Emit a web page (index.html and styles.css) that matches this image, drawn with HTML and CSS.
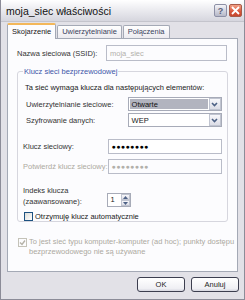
FILE: index.html
```html
<!DOCTYPE html>
<html lang="pl">
<head>
  <meta charset="UTF-8" />
  <title>moja_siec właściwości</title>
  <link rel="stylesheet" href="styles.css">
</head>
<body>
  <div class="window">
    <div class="titlebar">
      <span class="title">moja_siec właściwości</span>
      <div class="caption-buttons">
        <span class="cap-btn help">?</span>
        <span class="cap-btn close">
          <svg width="9" height="9" viewBox="0 0 9 9"><path d="M1 1L8 8M8 1L1 8" stroke="#fff" stroke-width="1.8"/></svg>
        </span>
      </div>
    </div>

    <div class="tabs">
      <span class="tab active">Skojarzenie</span>
      <span class="tab">Uwierzytelnianie</span>
      <span class="tab">Połączenia</span>
    </div>

    <div class="panel">
      <div class="row ssid">
        <span class="label">Nazwa sieciowa (SSID):</span>
        <span class="field disabled wide">moja_siec</span>
      </div>

      <fieldset class="group">
        <legend>Klucz sieci bezprzewodowej</legend>
        <p class="intro">Ta sieć wymaga klucza dla następujących elementów:</p>

        <div class="row combo-row">
          <span class="label">Uwierzytelnianie sieciowe:</span>
          <span class="combo"><span class="combo-text selected">Otwarte</span><span class="arrow"><svg width="7" height="5" viewBox="0 0 7 5"><path d="M1 1L3.5 3.5L6 1" stroke="#4d6185" stroke-width="1.6" fill="none"/></svg></span></span>
        </div>
        <div class="row combo-row">
          <span class="label">Szyfrowanie danych:</span>
          <span class="combo"><span class="combo-text">WEP</span><span class="arrow"><svg width="7" height="5" viewBox="0 0 7 5"><path d="M1 1L3.5 3.5L6 1" stroke="#4d6185" stroke-width="1.6" fill="none"/></svg></span></span>
        </div>

        <div class="row key-row first">
          <span class="label">Klucz sieciowy:</span>
          <span class="field key">●●●●●●●●</span>
        </div>
        <div class="row key-row">
          <span class="label muted">Potwierdź klucz sieciowy:</span>
          <span class="field key disabled">●●●●●●●●</span>
        </div>

        <div class="row index-row">
          <span class="label">Indeks klucza<br>(zaawansowane):</span>
          <span class="spinner">
            <span class="spin-value">1</span>
            <span class="spin-buttons">
              <span class="spin-btn"><svg width="5" height="3" viewBox="0 0 5 3"><path d="M0 3L2.5 0L5 3Z" fill="#4d6185"/></svg></span>
              <span class="spin-btn"><svg width="5" height="3" viewBox="0 0 5 3"><path d="M0 0L2.5 3L5 0Z" fill="#4d6185"/></svg></span>
            </span>
          </span>
        </div>

        <label class="check">
          <span class="box"></span>
          <span>Otrzymuję klucz automatycznie</span>
        </label>
      </fieldset>

      <label class="check adhoc">
        <span class="box checked"><svg width="7" height="7" viewBox="0 0 7 7"><path d="M1 3.5L3 5.5L6 1.5" stroke="#b5b2a8" stroke-width="1.4" fill="none"/></svg></span>
        <span>To jest sieć typu komputer-komputer (ad hoc); punkty dostępu<br>bezprzewodowego nie są używane</span>
      </label>
    </div>

    <div class="footer">
      <span class="btn">OK</span>
      <span class="btn">Anuluj</span>
    </div>
  </div>
</body>
</html>
```

FILE: styles.css
```css
/* Silver XP dialog, scaled down */
body {
  margin: 0;
  padding: 0;
  background: #ffffff;
  font-family: 'Liberation Sans', Arial, sans-serif;
  font-size: 7.5px;
  color: #1a1a1a;
}

.window {
  width: 245px;
  height: 300px;
  box-sizing: border-box;
  background: #e2e1e7;
  border: 1px solid #8c8c98;
  border-top: none;
  display: flex;
  flex-direction: column;
}

/* Title bar */
.titlebar {
  height: 21px;
  flex-shrink: 0;
  display: flex;
  align-items: center;
  justify-content: space-between;
  padding: 0 2px 0 5px;
  background: linear-gradient(#ffffff, #eeeef2 40%, #d6d6de 100%);
  border-bottom: 1px solid #c4c4cc;
}

.title {
  font-size: 10.5px;
  color: #111;
}

.caption-buttons {
  display: flex;
  gap: 2px;
}

.cap-btn {
  width: 13px;
  height: 13px;
  box-sizing: border-box;
  border: 1px solid #8d90a6;
  border-radius: 2px;
  display: flex;
  align-items: center;
  justify-content: center;
}

.help {
  background: linear-gradient(#f4f4f8, #b6b8c8);
  color: #5a6078;
  font-size: 9px;
  font-weight: bold;
}

.close {
  background: linear-gradient(#f2a186, #d8553a 60%, #c6482e);
  border-color: #a85a48;
}

/* Tabs */
.tabs {
  display: flex;
  align-items: flex-end;
  padding: 3px 0 0 6px;
  height: 13px;
  flex-shrink: 0;
}

.tab {
  height: 12px;
  line-height: 12px;
  padding: 0 4px;
  background: linear-gradient(#fefefe, #ecebf0);
  border: 1px solid #a4a9b5;
  border-bottom: none;
  border-radius: 2px 2px 0 0;
  color: #39425c;
  margin-right: 1px;
  white-space: nowrap;
}

.tab.active {
  height: 14px;
  line-height: 14px;
  background: #fcfcfe;
  border-top: 2px solid #f3b75a;
  color: #1a1a1a;
  position: relative;
  top: 1px;
}

/* Tab page */
.panel {
  margin: 0 6px;
  height: 234px;
  flex-shrink: 0;
  box-sizing: border-box;
  background: #fcfcfe;
  border: 1px solid #a4a9b5;
  padding: 6px 10px 0 9px;
}

.row {
  display: flex;
  align-items: center;
  white-space: nowrap;
}

.label {
  color: #333;
}

.muted {
  color: #aca9a0;
}

.field {
  height: 16px;
  box-sizing: border-box;
  border: 1px solid #b9bcc8;
  background: #fff;
  display: flex;
  align-items: center;
  padding: 0 3px;
}

.disabled {
  background: #fcfcfe;
  color: #b2b0ab;
}

.ssid {
  justify-content: space-between;
  height: 16px;
}

.ssid .wide {
  width: 121px;
}

/* Group box */
.group {
  margin: 6px 0 0 0;
  padding: 0 5px 0 6px;
  border: 1px solid #d6d6de;
  border-radius: 3px;
  height: 155px;
  box-sizing: border-box;
}

.group legend {
  color: #3d56a8;
  padding: 0 1px;
  margin-left: -1px;
}

.intro {
  margin: 7px 0 4px 1px;
}

.combo-row {
  height: 16px;
  justify-content: space-between;
}

.combo-row .label {
  padding-left: 2px;
}

.combo {
  width: 94px;
  height: 14px;
  box-sizing: border-box;
  border: 1px solid #a7abb8;
  background: #fff;
  display: flex;
  align-items: stretch;
}

.combo-text {
  flex: 1;
  display: flex;
  align-items: center;
  padding-left: 2px;
  margin: 1px;
}

.combo-text.selected {
  background: #b2b4bf;
  color: #111;
}

.arrow {
  width: 12px;
  box-sizing: border-box;
  border: 1px solid #c0c4d0;
  background: linear-gradient(#f8f8fb, #dcdde6);
  display: flex;
  align-items: center;
  justify-content: center;
}

.key-row {
  height: 15px;
  justify-content: space-between;
  margin-left: -1px;
  margin-top: 5px;
}

.key-row.first {
  margin-top: 11px;
}

.key {
  width: 114px;
  height: 15px;
  font-size: 7px;
  letter-spacing: 0.4px;
  color: #000;
}

.key.disabled {
  color: #b2b0ab;
}

.index-row {
  margin-top: 11px;
  margin-left: -1px;
  align-items: flex-end;
  justify-content: space-between;
  padding-right: 91px;
}

.index-row .label {
  line-height: 11px;
}

.spinner {
  width: 24px;
  height: 14px;
  box-sizing: border-box;
  border: 1px solid #a7abb8;
  background: #fff;
  display: flex;
}

.spin-value {
  flex: 1;
  padding-left: 3px;
  line-height: 12px;
}

.spin-buttons {
  width: 9px;
  display: flex;
  flex-direction: column;
}

.spin-btn {
  flex: 1;
  border: 1px solid #c0c4d0;
  background: linear-gradient(#f8f8fb, #dcdde6);
  display: flex;
  align-items: center;
  justify-content: center;
}

/* Check boxes */
.check {
  display: flex;
  align-items: flex-start;
  gap: 2px;
  margin-top: 5px;
  white-space: nowrap;
}

.box {
  width: 9px;
  height: 9px;
  box-sizing: border-box;
  border: 1px solid #1c5180;
  background: linear-gradient(135deg, #dcdcd7, #ffffff);
  display: flex;
  align-items: center;
  justify-content: center;
  flex-shrink: 0;
}

.adhoc {
  margin-top: 15px;
  color: #aca9a0;
  line-height: 10px;
  margin-left: 1px;
}

.box.checked {
  border-color: #c4c2b8;
  background: #fcfcfe;
  margin-top: 1px;
}

/* Buttons */
.footer {
  display: flex;
  justify-content: flex-end;
  gap: 6px;
  padding: 5px 5px 0 0;
}

.btn {
  width: 48px;
  height: 15px;
  box-sizing: border-box;
  border: 1px solid #3c3e4f;
  border-radius: 3px;
  background: linear-gradient(#ffffff, #f0f0f4 80%, #d6d7e0);
  display: flex;
  align-items: center;
  justify-content: center;
  color: #222;
}
```
